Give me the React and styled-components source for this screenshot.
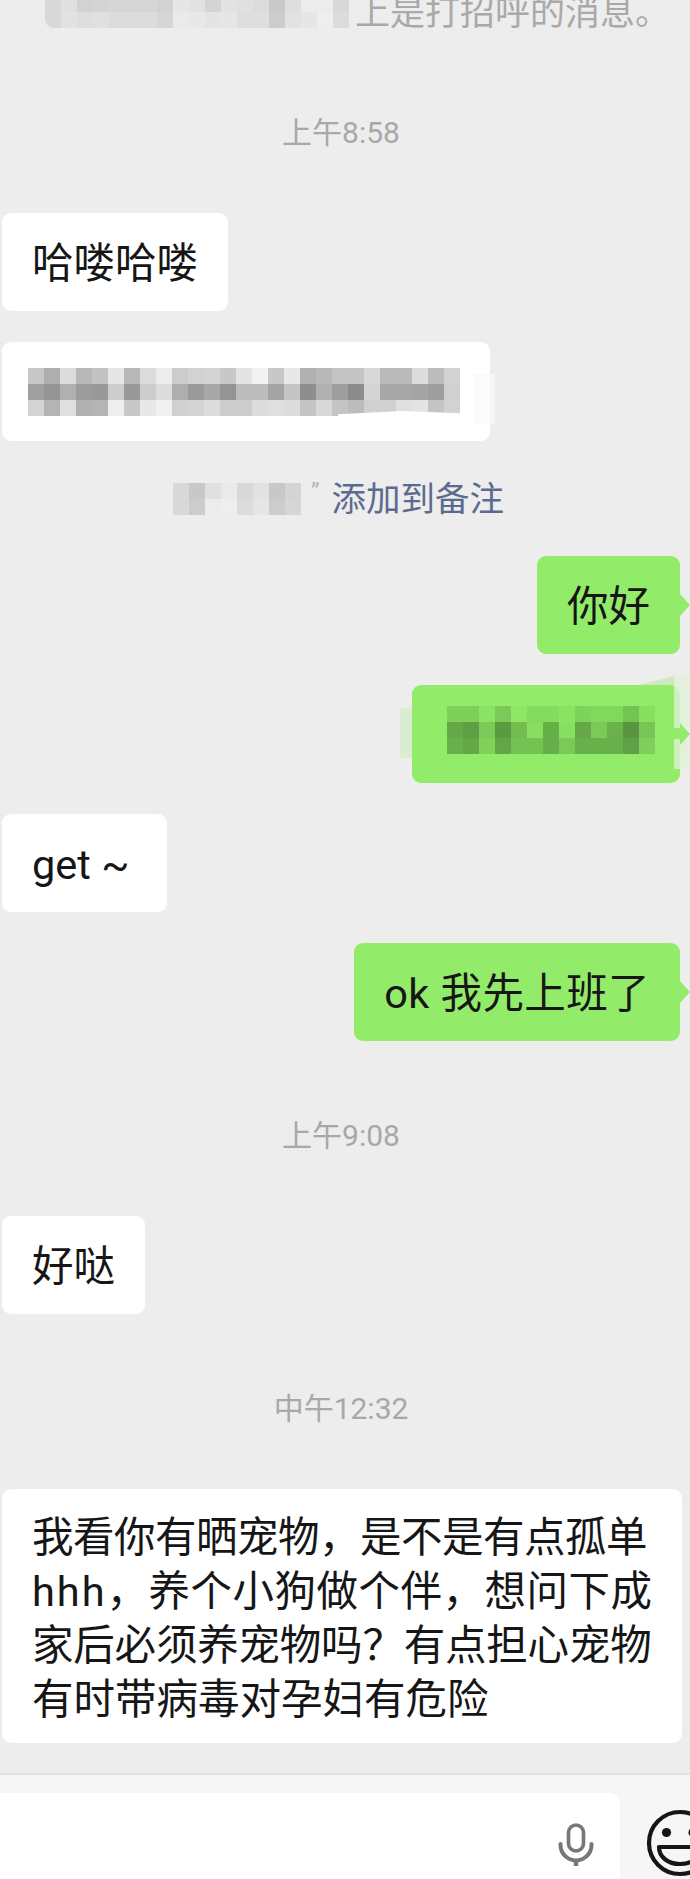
import React from "react";
import styled, { createGlobalStyle } from "styled-components";

const Global = createGlobalStyle`
  html, body { margin: 0; padding: 0; background: #ededed; }
  body { font-family: Roboto, "Noto Sans CJK SC", "Noto Sans", sans-serif; }
`;

const Page = styled.div`
  width: 690px;
  height: 1879px;
  overflow: hidden;
  background: #ededed;
  display: flex;
  flex-direction: column;
`;

const Chat = styled.main`
  flex: 1;
  display: flex;
  flex-direction: column;
  gap: 31px;
`;

const Notice = styled.div`
  height: 38px;
  display: flex;
  align-items: flex-end;
  padding: 0 0 10px 45px;
  box-sizing: border-box;
  overflow: hidden;
`;

const TopBlur = styled.div`
  border-bottom-left-radius: 9px;
  overflow: hidden;
`;

const NoticeText = styled.span`
  font-size: 35px;
  line-height: 32px;
  color: #a9a9a9;
  white-space: nowrap;
  margin: 0 0 -2px 6px;
`;

const Time = styled.div`
  height: 40px;
  margin: 43px 8px 30px 0;
  text-align: center;
  font-size: 30px;
  line-height: 42px;
  color: #a8a8a8;
`;

const Row = styled.div`
  display: flex;
  justify-content: ${(p) => (p.$mine ? "flex-end" : "flex-start")};
  padding: ${(p) => (p.$mine ? "0 10px 0 0" : "0 0 0 2px")};
`;

const Bubble = styled.div`
  position: relative;
  box-sizing: border-box;
  min-height: 98px;
  padding: 3px ${(p) => p.$padRight ?? 30}px 0 30px;
  display: flex;
  align-items: center;
  border-radius: 9px;
  font-size: 41.5px;
  line-height: 54px;
  letter-spacing: ${(p) => p.$spacing || 0}px;
  color: #161616;
  white-space: nowrap;
  background: ${(p) => (p.$mine ? "#93ec69" : "#ffffff")};

  ${(p) =>
    p.$mine &&
    `&::after {
      content: "";
      position: absolute;
      right: -10px;
      top: 50%;
      width: 10px;
      height: 22px;
      transform: translateY(-50%);
      background: #93ec69;
      clip-path: polygon(0 0, 100% 50%, 0 100%);
    }`}
`;

const LongBubble = styled(Bubble)`
  display: block;
  width: 680px;
  padding: 22px 0 16px 30px;
`;

const TextLine = styled.div`
  letter-spacing: ${(p) => p.$spacing || 0}px;
`;

const Latin = styled.span`
  letter-spacing: 2px;
`;

const Mosaic = styled.div`
  display: grid;
  grid-template-columns: repeat(${(p) => p.$cols}, 16px);
  grid-auto-rows: 16px;
  filter: blur(0.7px);
`;

const Cell = styled.i`
  display: block;
  background: ${(p) => p.$c};
`;

const BlurBubble = styled(Bubble)`
  padding: 0;
  width: ${(p) => p.$width}px;
  height: ${(p) => p.$height}px;
`;

const WhiteMosaicSlot = styled.div`
  position: absolute;
  left: 26px;
  top: 26px;
`;

const GreenMosaicSlot = styled.div`
  position: absolute;
  left: 35px;
  top: 21px;
`;

const WhiteSmear = styled.div`
  position: absolute;
  left: 336px;
  top: 69px;
  width: 128px;
  height: 8px;
  background: #fff;
  clip-path: polygon(0 40%, 50% 0, 100% 30%, 100% 100%, 0 100%);
`;

const WhiteFuzz = styled.div`
  position: absolute;
  right: -5px;
  top: 32px;
  width: 22px;
  height: 50px;
  background: rgba(250, 250, 250, 0.7);
`;

const FaintPatch = styled.div`
  position: absolute;
  left: -12px;
  top: 23px;
  width: 12px;
  height: 50px;
  background: #dcecd0;
`;

const FaintPatchRight = styled.div`
  position: absolute;
  right: -11px;
  top: ${(p) => p.$top}px;
  width: 17px;
  height: ${(p) => p.$height}px;
  background: rgba(224, 240, 214, 0.8);
`;

const FaintTriangle = styled.div`
  position: absolute;
  right: 6px;
  top: -9px;
  width: 34px;
  height: 9px;
  background: #cfe8bf;
  clip-path: polygon(0 100%, 100% 0, 100% 100%);
`;

const NoteRow = styled.div`
  height: 44px;
  margin: 5px 0 4px;
  display: flex;
  align-items: center;
  padding-left: 173px;
`;

const Quote = styled.span`
  font-size: 24px;
  line-height: 30px;
  color: #b6b6b6;
  margin: 0 12px 0 10px;
  align-self: flex-start;
`;

const NoteLink = styled.span`
  font-size: 34.5px;
  line-height: 44px;
  color: #5c6b8d;
  white-space: nowrap;
`;

const Footer = styled.footer`
  height: 106px;
  box-sizing: border-box;
  margin-top: 30px;
  border-top: 2px solid #e3e3e3;
  background: #f6f6f6;
  padding-top: 18px;
  display: flex;
`;

const Input = styled.div`
  flex: 0 0 620px;
  background: #fff;
  border-top-right-radius: 10px;
  display: flex;
  justify-content: flex-end;
  padding: 30px 26px 0 0;
  box-sizing: border-box;
`;

const EmojiSlot = styled.div`
  flex: none;
  padding: 15px 0 0 25px;
`;

const greys = (s) => s.split(",").map((h) => `#${h}${h}${h}`);

const whiteCells = [
  ...greys("c8,ae,dc,b8,c2,e6,b8,dc,ec,cc,d2,d4,c8,e4,f2,c8,e8,b0,b8,c4,c4,d8,ba,ba,dc,bc,d2"),
  ...greys("a0,94,b0,9c,98,cc,98,cc,dc,ae,9a,a8,94,bc,bc,a4,c4,8e,b0,9e,8c,d4,a8,a8,a4,9e,d0"),
  ...greys("d4,b4,e0,b0,b4,ee,c8,e8,f0,d0,d4,dc,cc,cc,dc,e0,dc,c4,d8,c4,bc,d0,d0,e0,e4,c4,d2"),
];

const greenCells = [
  "#7fd05a","#7fd05a","#8ae362","#7bc958","#8ee766","#84dc5e","#84dc5e","#8ae462","#7ed45a","#82d85c","#82d85c","#74c452","#88df60",
  "#64a848","#5e9e44","#7cc858","#5c9a42","#72bc50","#88de60","#66b048","#86e062","#64a848","#7cc858","#6cb24c","#5a9442","#78c456",
  "#68b04a","#62a846","#80d05a","#62a648","#74c252","#74c252","#66ae4a","#7cc858","#68b04a","#68b04a","#68b04a","#60a046","#7ed05a",
];

const topCells = [
  ...greys("d8,e0,d2,d4,d6,d6,d6,d2,e6,e2,d4,e2,e0,dc,ca,de,ec,ec,d8"),
  ...greys("d8,e2,de,e0,dc,dc,dc,d6,ea,e8,e4,e6,de,de,cc,e2,e6,ee,dc"),
];

const noteCells = [
  ...greys("d8,c8,e0,ea,d8,e2,c8,d4"),
  ...greys("d8,cc,ec,ee,dc,e6,cc,d6"),
];

const Blocks = ({ cells, cols }) => (
  <Mosaic $cols={cols}>
    {cells.map((c, i) => (
      <Cell key={i} $c={c} />
    ))}
  </Mosaic>
);

const MicIcon = () => (
  <svg width="36" height="44" viewBox="0 0 36 44" fill="none" stroke="#777" strokeLinecap="round">
    <rect x="10.5" y="2" width="15" height="26" rx="7.5" strokeWidth="3.6" />
    <path d="M2.5 21v1a15.5 15.5 0 0 0 31 0v-1" strokeWidth="4" />
    <path d="M18 38v5" strokeWidth="4.5" strokeLinecap="butt" />
  </svg>
);

const EmojiIcon = () => (
  <svg width="70" height="70" viewBox="0 0 70 70" fill="none">
    <circle cx="35" cy="35" r="31" stroke="#161616" strokeWidth="4.2" />
    <circle cx="21.5" cy="24.5" r="4.6" fill="#161616" />
    <circle cx="48" cy="24.5" r="4.6" fill="#161616" />
    <path d="M14 39h42c0 10-9 17-21 17S14 49 14 39Z" stroke="#161616" strokeWidth="4.2" strokeLinejoin="round" />
  </svg>
);

export default function App() {
  return (
    <Page>
      <Global />
      <Chat>
        <Notice>
          <TopBlur>
            <Blocks cells={topCells} cols={19} />
          </TopBlur>
          <NoticeText>上是打招呼的消息。</NoticeText>
        </Notice>

        <Time>上午8:58</Time>

        <Row>
          <Bubble>哈喽哈喽</Bubble>
        </Row>
        <Row>
          <BlurBubble $width={488} $height={99}>
            <WhiteMosaicSlot>
              <Blocks cells={whiteCells} cols={27} />
            </WhiteMosaicSlot>
            <WhiteSmear />
            <WhiteFuzz />
          </BlurBubble>
        </Row>

        <NoteRow>
          <Blocks cells={noteCells} cols={8} />
          <Quote>”</Quote>
          <NoteLink>添加到备注</NoteLink>
        </NoteRow>

        <Row $mine>
          <Bubble $mine>你好</Bubble>
        </Row>
        <Row $mine>
          <BlurBubble $mine $width={268} $height={98}>
            <FaintPatch />
            <FaintTriangle />
            <FaintPatchRight $top={-10} $height={53} />
            <FaintPatchRight $top={54} $height={30} />
            <GreenMosaicSlot>
              <Blocks cells={greenCells} cols={13} />
            </GreenMosaicSlot>
          </BlurBubble>
        </Row>
        <Row>
          <Bubble $padRight={38}>get ~</Bubble>
        </Row>
        <Row $mine>
          <Bubble $mine $spacing={0.4}>ok 我先上班了</Bubble>
        </Row>

        <Time>上午9:08</Time>

        <Row>
          <Bubble>好哒</Bubble>
        </Row>

        <Time>中午12:32</Time>

        <Row>
          <LongBubble>
            <TextLine $spacing={-0.5}>我看你有晒宠物，是不是有点孤单</TextLine>
            <TextLine $spacing={0.5}><Latin>hhh</Latin>，养个小狗做个伴，想问下成</TextLine>
            <TextLine $spacing={-0.2}>家后必须养宠物吗？有点担心宠物</TextLine>
            <TextLine>有时带病毒对孕妇有危险</TextLine>
          </LongBubble>
        </Row>
      </Chat>

      <Footer>
        <Input>
          <MicIcon />
        </Input>
        <EmojiSlot>
          <EmojiIcon />
        </EmojiSlot>
      </Footer>
    </Page>
  );
}
